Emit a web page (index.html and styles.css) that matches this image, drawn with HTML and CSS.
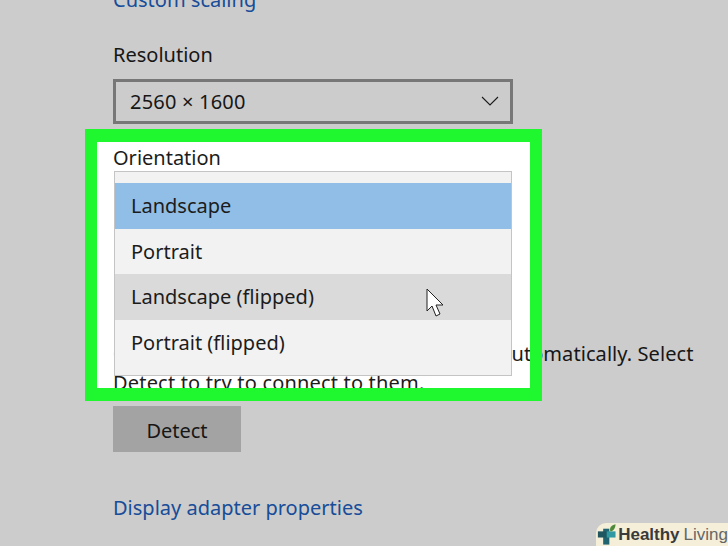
FILE: index.html
```html
<!DOCTYPE html>
<html lang="en">

<head>
    <meta charset="UTF-8">
    <title>Display settings - Orientation</title>
    <link rel="stylesheet" href="styles.css">
</head>

<body>
    <div class="settings">
        <a class="link scaling" href="#">Custom scaling</a>

        <p class="label">Resolution</p>
        <div class="select">
            <span class="value">2560 × 1600</span>
            <svg class="chevron" width="18" height="11" viewBox="0 0 18 11">
                <path d="M1 1l8 8 8-8" fill="none" stroke="#222" stroke-width="1.1" />
            </svg>
        </div>

        <div class="orientation">
            <p class="label">Orientation</p>
            <ul class="dropdown">
                <li class="selected">Landscape</li>
                <li>Portrait</li>
                <li class="hover">Landscape (flipped)</li>
                <li>Portrait (flipped)</li>
            </ul>
        </div>

        <p class="note">
            <span class="note-first">Older displays might not always connect automatically. Select</span>
            <span class="note-second">Detect to try to connect to them.</span>
        </p>
        <button class="detect">Detect</button>
        <a class="link adapter" href="#">Display adapter properties</a>
    </div>

    <!-- green frame, its shadow dims the rest of the page -->
    <div class="focus"></div>

    <svg class="cursor" width="20" height="30" viewBox="0 0 20 30">
        <path d="M1 1v22l5-5 4 10 4-2-4-9h7z" fill="#fff" stroke="#222" stroke-width="1" />
    </svg>

    <div class="watermark">
        <svg class="logo" width="24" height="24" viewBox="0 0 24 24">
            <path d="M7 6h7v18H7z" fill="#1f6470" />
            <path d="M1 9h10v7H1z" fill="#1f5660" />
            <path d="M11 9h10v7H11z" fill="#2f98a2" />
            <path d="M15 9c-1-4 1-7 6-8 0 4-2 8-6 8z" fill="#4f8a3c" />
        </svg>
        <b>Healthy</b><span>Living</span>
    </div>
</body>

</html>
```

FILE: styles.css
```css
* {
    margin: 0;
    padding: 0;
    box-sizing: border-box;
}

html,
body {
    width: 728px;
    height: 546px;
    overflow: hidden;
}

body {
    position: relative;
    background-color: #fff;
    color: #1c1c1c;
    font-family: "Noto Sans", sans-serif;
    font-size: 20px;
}

.settings {
    display: flex;
    flex-direction: column;
    align-items: flex-start;
    padding-left: 113px;
    margin-top: -15px;
}

.link {
    color: #2060c0;
    text-decoration: none;
    line-height: 30px;
}

.label {
    line-height: 30px;
}

.scaling {
    margin-bottom: 25px;
}

.select {
    display: flex;
    align-items: center;
    justify-content: space-between;
    width: 400px;
    height: 45px;
    margin-top: 9px;
    padding: 0 11px 0 14px;
    border: 3px solid #959595;
}

.value {
    letter-spacing: 0.2px;
    margin-top: -1px;
}

.orientation {
    position: relative;
    margin-top: 19px;
    width: 399px;
    height: 196px;
}

.dropdown {
    position: absolute;
    top: 28px;
    left: 1px;
    width: 398px;
    padding: 11px 0 10px;
    list-style: none;
    background-color: #f2f2f2;
    border: 1px solid #c4c4c4;
}

.dropdown li {
    height: 45.5px;
    padding-left: 16px;
    line-height: 45.5px;
}

.selected {
    background-color: #90bee6;
}

.hover {
    background-color: #dadada;
}

.note {
    line-height: 29px;
    white-space: nowrap;
}

.note-first,
.note-second {
    display: block;
}

.note-first {
    letter-spacing: 0.07px;
}

.note-second {
    letter-spacing: 0.18px;
}

.detect {
    width: 128px;
    height: 46px;
    margin-top: 9px;
    padding-top: 3px;
    border: none;
    background-color: #ccc;
    color: inherit;
    font: inherit;
}

.adapter {
    margin-top: 41px;
}

.focus {
    position: absolute;
    left: 85px;
    top: 129px;
    width: 457px;
    height: 272px;
    border: 12px solid #1ff72f;
    border-top-width: 13px;
    border-bottom-width: 13px;
    box-shadow: 0 0 0 800px rgba(0, 0, 0, 0.2);
}

.cursor {
    position: absolute;
    left: 426px;
    top: 288px;
}

.watermark {
    position: absolute;
    right: 0;
    bottom: 0;
    display: flex;
    align-items: center;
    width: 132px;
    height: 23px;
    padding-left: 1px;
    border-top-left-radius: 10px;
    background-color: #f5eed8;
    font-family: "Liberation Sans", sans-serif;
    font-size: 17px;
    color: #666;
}

.watermark b {
    margin-right: 4px;
    color: #3a3a3a;
}

.logo {
    margin-top: -1px;
}
```
